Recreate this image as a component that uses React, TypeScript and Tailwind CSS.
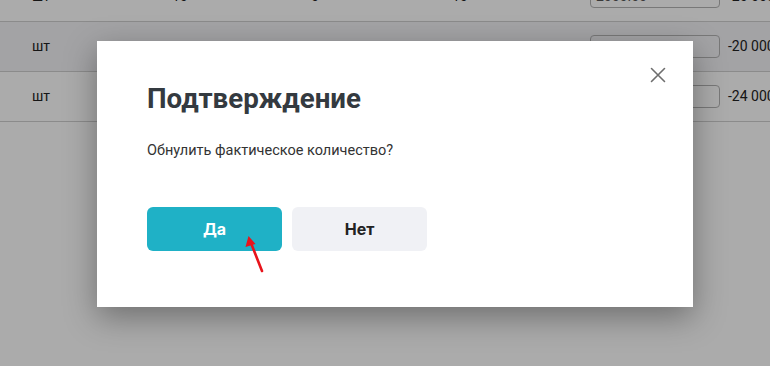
import React from 'react';

const rows = [
    { unit: 'шт', a: '10', b: '0', c: '10', price: '2000.00', sum: '-20 000' },
    { unit: 'шт', a: '', b: '', c: '', price: '', sum: '-20 000' },
    { unit: 'шт', a: '', b: '', c: '', price: '', sum: '-24 000' },
];

const CloseIcon = () => (
    <svg width="16" height="16" viewBox="0 0 16 16" fill="none">
        <path d="M1.5 1.5 L14.5 14.5 M14.5 1.5 L1.5 14.5" stroke="#6e6e6e" strokeWidth="1.6" strokeLinecap="round" />
    </svg>
);

export default function App() {
    return (
        <div className="relative w-[770px] h-[366px] overflow-hidden bg-white" style={{ fontFamily: 'Roboto, "Liberation Sans", sans-serif' }}>
            {/* table behind the dialog */}
            <div className="-mt-[28px] text-[14px] text-[#222]">
                {rows.map((r, i) => (
                    <div
                        key={i}
                        className={`flex items-center h-[50px] border-b border-[#cfcfcf] ${i === 1 ? 'bg-[#f3f3f7]' : ''}`}
                    >
                        <div className="w-[172px] shrink-0 pl-[32px]">{r.unit}</div>
                        <div className="w-[139px] shrink-0">{r.a}</div>
                        <div className="w-[141px] shrink-0">{r.b}</div>
                        <div className="w-[138px] shrink-0">{r.c}</div>
                        <div className="w-[138px] shrink-0">
                            <div className="w-[130px] h-[23px] border border-[#b4b4b4] rounded-[4px] px-[5px] flex items-center text-[#555]">
                                {r.price}
                            </div>
                        </div>
                        <div className="whitespace-nowrap shrink-0">{r.sum}</div>
                    </div>
                ))}
            </div>

            {/* overlay */}
            <div className="absolute inset-0 bg-black/[0.33] pl-[97px] pt-[41px]">
                <div className="relative w-[596px] h-[266px] bg-white shadow-[0_10px_30px_rgba(0,0,0,0.35)] pl-[50px] pt-[40px]">
                    <button className="absolute right-[27px] top-[26px]">
                        <CloseIcon />
                    </button>
                    <h2 className="text-[27.7px] font-bold leading-[36px] text-[#343a40]">Подтверждение</h2>
                    <p className="mt-[24px] text-[14.5px] leading-[20px] text-[#333]">Обнулить фактическое количество?</p>
                    <div className="flex gap-[10px] mt-[46px]" style={{ fontFamily: 'Inter, "Noto Sans", sans-serif' }}>
                        <button className="w-[135px] h-[44px] rounded-[6px] bg-[#1fb1c6] text-white text-[16px] font-bold">Да</button>
                        <button className="w-[135px] h-[44px] rounded-[6px] bg-[#f0f1f5] text-[#222] text-[16px] font-bold">Нет</button>
                    </div>
                </div>
            </div>

            {/* red arrow annotation */}
            <svg className="absolute left-[240px] top-[230px]" width="30" height="46" viewBox="0 0 30 46">
                <path d="M22 41 L11 13" stroke="#e8141b" strokeWidth="2.6" strokeLinecap="round" />
                <path d="M8.5 6 L5.5 17 L15.5 14 Z" fill="#e8141b" />
            </svg>
        </div>
    );
}
